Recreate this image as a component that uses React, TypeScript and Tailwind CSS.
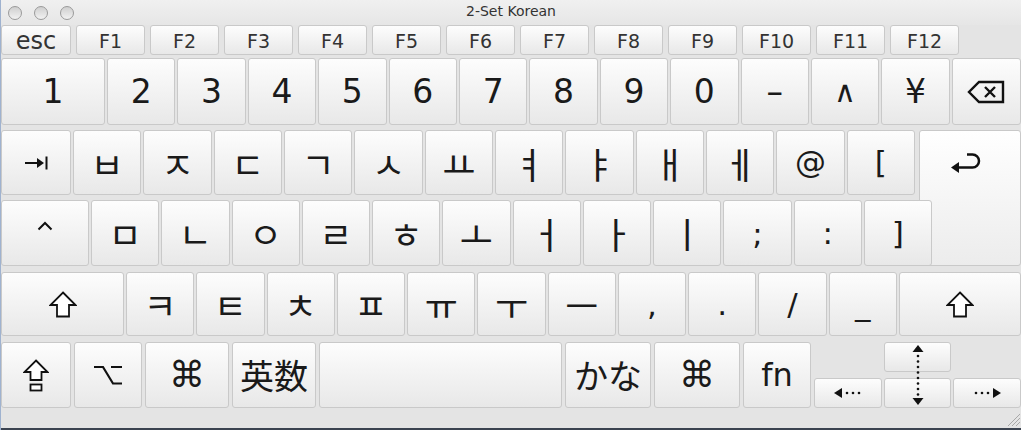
import type { ReactNode } from "react";
import clsx from "clsx";

// Visor de teclado "2-Set Korean" (distribución JIS)

const SANS = "font-['DejaVu_Sans','Noto_Sans_CJK_KR',sans-serif]";
const CJK_KR = "font-['Noto_Sans_CJK_KR',sans-serif]";
const CJK_JP = "font-['Noto_Sans_CJK_JP',sans-serif]";

function Key({ className, children }: { className?: string; children?: ReactNode }) {
  return (
    <div
      className={clsx(
        "flex shrink-0 items-center justify-center rounded-[3px] border border-[#c9c9c9] bg-linear-to-b from-[#fdfdfd] to-[#e8e8e8] leading-none text-[#1a1a1a]",
        className
      )}
    >
      {children}
    </div>
  );
}

function TabIcon() {
  return (
    <svg width="24" height="14" viewBox="0 0 24 14">
      <line x1="1" y1="7" x2="15" y2="7" stroke="#111" strokeWidth="2" />
      <polygon points="13,2 20,7 13,12" fill="#111" />
      <rect x="21.5" y="0.5" width="2" height="13" fill="#111" />
    </svg>
  );
}

function BackspaceIcon() {
  return (
    <svg width="38" height="24" viewBox="0 0 38 24">
      <path d="M12 2 H36 V22 H12 L2 12 Z" fill="none" stroke="#111" strokeWidth="2.4" strokeLinejoin="miter" />
      <path d="M18 7 L28 17 M28 7 L18 17" stroke="#111" strokeWidth="2.4" />
    </svg>
  );
}

function ReturnIcon() {
  return (
    <svg width="32" height="24" viewBox="0 0 32 24">
      <path d="M17 2.5 H22.5 A6.5 6.5 0 0 1 22.5 15.5 H7" fill="none" stroke="#111" strokeWidth="2.5" />
      <polygon points="1,15.5 9,10 9,21" fill="#111" />
    </svg>
  );
}

function ShiftIcon() {
  return (
    <svg width="28" height="27" viewBox="0 0 28 27">
      <path d="M14 1.5 L26.5 14 H20 V25.5 H8 V14 H1.5 Z" fill="#fff" stroke="#111" strokeWidth="1.8" strokeLinejoin="miter" />
    </svg>
  );
}

function CapsIcon() {
  return (
    <svg width="26" height="33" viewBox="0 0 26 33">
      <path d="M13 1.5 L24.5 13 H18.5 V21 H7.5 V13 H1.5 Z" fill="#fff" stroke="#111" strokeWidth="1.8" />
      <rect x="7.5" y="25.5" width="11" height="6" fill="#fff" stroke="#111" strokeWidth="1.8" />
    </svg>
  );
}

function OptionIcon() {
  return (
    <svg width="30" height="22" viewBox="0 0 30 22">
      <path d="M1 3 H10 L20 19.5 H29 M18 3 H29" fill="none" stroke="#111" strokeWidth="2.2" />
    </svg>
  );
}

function CtrlIcon() {
  return (
    <svg width="16" height="10" viewBox="0 0 16 10">
      <path d="M1.5 8.5 L8 2 L14.5 8.5" fill="none" stroke="#111" strokeWidth="2" />
    </svg>
  );
}

function Dots({ xs, y }: { xs: number[]; y: number }) {
  return (
    <>
      {xs.map((x) => (
        <circle key={x} cx={x} cy={y} r="1.3" fill="#111" />
      ))}
    </>
  );
}

const numRow = ["2", "3", "4", "5", "6", "7", "8", "9", "0", "–", "∧", "¥"];
const topRow = ["ㅂ", "ㅈ", "ㄷ", "ㄱ", "ㅅ", "ㅛ", "ㅕ", "ㅑ", "ㅐ", "ㅔ", "@", "["];
const midRow = ["ㅁ", "ㄴ", "ㅇ", "ㄹ", "ㅎ", "ㅗ", "ㅓ", "ㅏ", "ㅣ", ";", ":", "]"];
const lowRow = ["ㅋ", "ㅌ", "ㅊ", "ㅍ", "ㅠ", "ㅜ", "ㅡ", ",", ".", "/", "_"];

const isJamo = (s: string) => /[\u3130-\u318f]/.test(s);

function Label({ ch }: { ch: string }) {
  return isJamo(ch) ? (
    <span className={clsx(CJK_KR, "text-[36px]")}>{ch}</span>
  ) : (
    <span className={clsx(SANS, "text-[31px]")}>{ch}</span>
  );
}

export default function App() {
  return (
    <div className={clsx(SANS, "flex h-[430px] w-[1021px] flex-col overflow-hidden border-l border-[#9fb2cf] bg-[#e4e4e4]")}>
      {/* barra de título */}
      <div className="relative flex h-[25px] shrink-0 items-center bg-linear-to-b from-[#f0f0f0] to-[#e6e6e6] pl-[7px]">
        <div className="flex gap-[12px]">
          {[0, 1, 2].map((i) => (
            <div
              key={i}
              className="h-[14px] w-[14px] rounded-full border border-[#9a9a9a] bg-linear-to-b from-[#cfcfcf] to-[#f2f2f2]"
            />
          ))}
        </div>
        <div className="absolute inset-x-0 top-[4px] text-center text-[14px] leading-none text-[#333]">2-Set Korean</div>
      </div>

      {/* fila de funciones */}
      <div className="flex h-[30px] shrink-0 gap-[5px]">
        <Key className="w-[70px] pt-[2px] text-[24px] text-[#333]">esc</Key>
        {Array.from({ length: 12 }, (_, i) => (
          <Key key={i} className="w-[69px] pt-[3px] text-[19px] text-[#333]">
            F{i + 1}
          </Key>
        ))}
      </div>

      <div className="mt-[3px] flex flex-col gap-[5px]">
        {/* números */}
        <div className="flex h-[67px] gap-[2px]">
          <Key className="w-[104px] text-[33px]">1</Key>
          {numRow.map((ch) => (
            <Key key={ch} className={clsx("w-[68.4px]", ch === "∧" ? "text-[30px]" : "text-[33px]")}>
              {ch}
            </Key>
          ))}
          <Key className="flex-1">
            <BackspaceIcon />
          </Key>
        </div>

        {/* filas 2 y 3 con la tecla de retorno */}
        <div className="flex gap-[2px]">
          <div className="flex w-[916px] shrink-0 flex-col gap-[5px]">
            <div className="flex h-[65px] gap-[2px]">
              <Key className="w-[70px]">
                <TabIcon />
              </Key>
              {topRow.map((ch) => (
                <Key key={ch} className="w-[68.33px]">
                  <Label ch={ch} />
                </Key>
              ))}
            </div>
            <div className="relative z-10 flex h-[66px] w-[933px] gap-[2px]">
              <Key className="w-[88px] items-start pt-[20px]">
                <CtrlIcon />
              </Key>
              {midRow.map((ch) => (
                <Key key={ch} className="w-[68.25px]">
                  <Label ch={ch} />
                </Key>
              ))}
            </div>
          </div>
          <Key className="h-[136px] flex-1 items-start from-[#ffffff] to-[#ececec] pt-[21px] pr-[8px]">
            <ReturnIcon />
          </Key>
        </div>

        {/* fila de mayúsculas */}
        <div className="mt-[1px] flex h-[64px] gap-[2px]">
          <Key className="w-[123px]">
            <ShiftIcon />
          </Key>
          {lowRow.map((ch) => (
            <Key key={ch} className="w-[68.27px]">
              <Label ch={ch} />
            </Key>
          ))}
          <Key className="flex-1">
            <ShiftIcon />
          </Key>
        </div>

        {/* fila inferior */}
        <div className="mt-[1px] flex h-[66px] gap-[3px]">
          <Key className="w-[70px] from-[#c6c6c6] to-[#c6c6c6]">
            <CapsIcon />
          </Key>
          <Key className="w-[68px]">
            <OptionIcon />
          </Key>
          <Key className="w-[84px] text-[36px]">⌘</Key>
          <Key className={clsx(CJK_JP, "w-[84px] text-[34px]")}>英数</Key>
          <Key className="w-[243px]" />
          <Key className={clsx(CJK_JP, "w-[86px] text-[34px]")}>かな</Key>
          <Key className="w-[86px] text-[36px]">⌘</Key>
          <Key className="w-[68px] text-[32px]">fn</Key>
          <div className="relative grid flex-1 grid-cols-3 grid-rows-2 gap-x-[2px] gap-y-[6px]">
            <Key className="col-start-2" />
            <Key className="col-start-1 row-start-2">
              <svg width="28" height="12" viewBox="0 0 28 12">
                <polygon points="0,6 8,1 8,11" fill="#111" />
                <Dots xs={[13, 19, 25]} y={6} />
              </svg>
            </Key>
            <Key className="col-start-2 row-start-2" />
            <Key className="col-start-3 row-start-2">
              <svg width="28" height="12" viewBox="0 0 28 12">
                <polygon points="28,6 20,1 20,11" fill="#111" />
                <Dots xs={[3, 9, 15]} y={6} />
              </svg>
            </Key>
            <svg
              className="pointer-events-none absolute top-0 left-[94px]"
              width="20"
              height="66"
              viewBox="0 0 20 66"
            >
              <polygon points="10,3 4.5,10 15.5,10" fill="#111" />
              {[14, 19.5, 25, 30.5, 36, 41.5, 47, 52.5].map((y) => (
                <circle key={y} cx="10" cy={y} r="1.3" fill="#111" />
              ))}
              <polygon points="4.5,56 15.5,56 10,63" fill="#111" />
            </svg>
          </div>
        </div>
      </div>

      {/* barra inferior con el agarre */}
      <div className="flex flex-1 items-end justify-end">
        <svg width="15" height="14" viewBox="0 0 15 14" className="mb-[2px]">
          <path d="M14 2 L2 14 M14 6 L6 14 M14 10 L10 14" stroke="#a8a8a8" strokeWidth="1" />
        </svg>
      </div>
      <div className="h-[2px] shrink-0 bg-[#3b4350]" />
    </div>
  );
}
